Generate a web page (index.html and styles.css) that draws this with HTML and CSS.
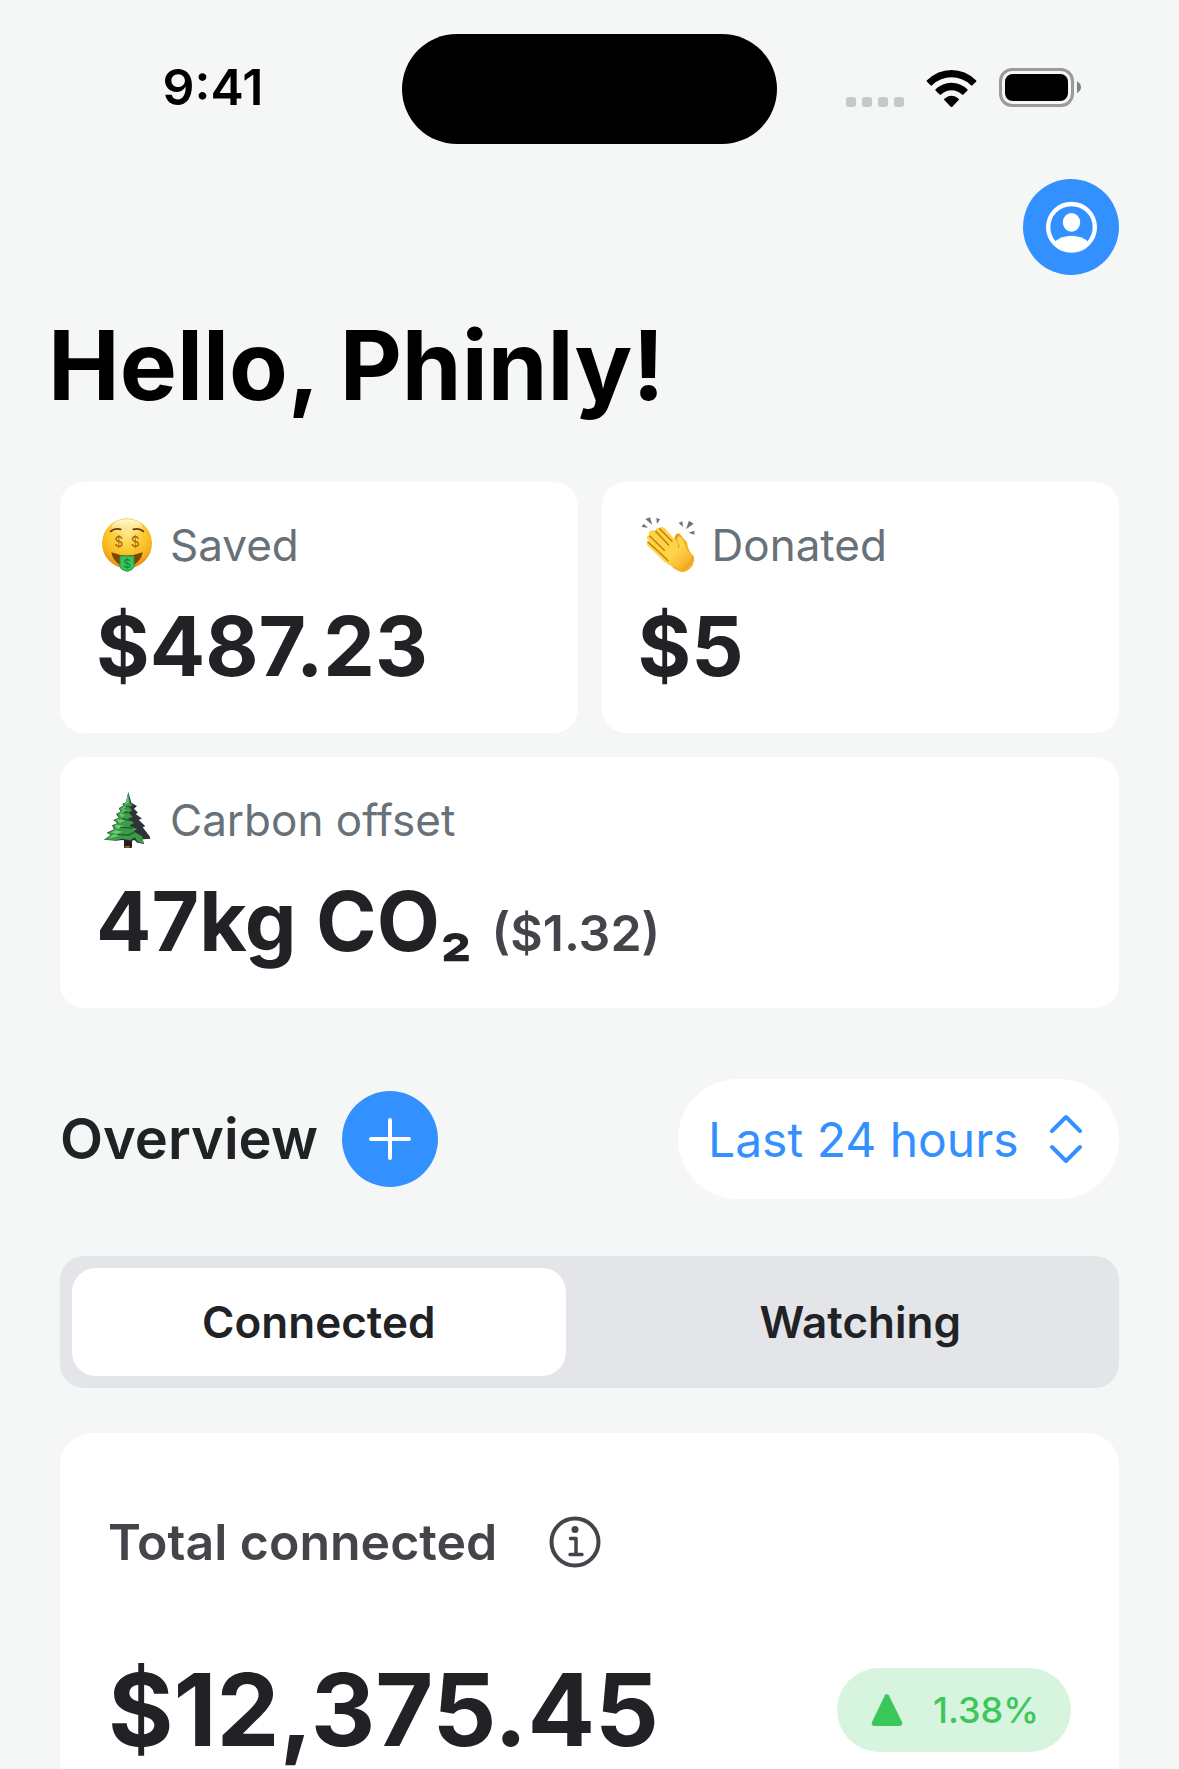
FILE: index.html
```html
<!DOCTYPE html>
<html lang="en">
<head>
<meta charset="utf-8">
<meta name="viewport" content="width=device-width, initial-scale=1">
<title>Phinly</title>
<link rel="stylesheet" href="styles.css">
</head>
<body>
<div class="status-bar">
  <time class="status-time">9:41</time>
  <div class="island"></div>
  <div class="status-icons" aria-hidden="true">
    <div class="signal"><i></i><i></i><i></i><i></i></div>
    <svg class="wifi" viewBox="379 147 151 111">
      <path d="M381 178Q413 147 454.500 147Q496 147 528 178Q531 180 528 182L518 192Q515 195 512 192Q487 169 454.500 169Q422 169 397 192Q394 195 391 192L381 182Q378 180 381 178Z"/>
      <path d="M407 205Q427 185 454.500 185Q482 185 502 205Q504 207 502 209L491 220Q488 223 485 220Q471 208 454.500 208Q438 208 424 220Q421 223 418 220L407 209Q405 207 407 205Z"/>
      <path d="M433 233Q443 224 454.500 224Q466 224 476 233Q478 235 476 237L457 257Q454.500 259 452 257L433 237Q431 235 433 233Z"/>
    </svg>
    <svg class="battery" viewBox="597 144 246 117">
      <rect x="601.500" y="148.500" width="216" height="108" rx="35" fill="none" stroke="#999a9a" stroke-width="9"/>
      <rect x="615" y="162" width="189" height="81" rx="23"/>
      <path d="M831 184Q843 190 843 202Q843 213 831 219Z" fill="#808181"/>
    </svg>
  </div>
</div>

<header class="header">
  <button class="round-button profile" type="button" aria-label="Profile">
    <svg viewBox="669 477 288 288">
      <circle cx="814.500" cy="622" r="70" fill="none" stroke="#fff" stroke-width="13"/>
      <ellipse cx="814.500" cy="607" rx="26" ry="28" fill="#fff"/>
      <path d="M763 665Q786 647 814.500 647Q843 647 866 665Q846 694 814.500 694Q783 694 763 665Z" fill="#fff"/>
    </svg>
  </button>
  <h1 class="greeting">Hello, Phinly!</h1>
</header>

<main class="content">
  <section class="stats" aria-label="Totals">
    <article class="stat">
      <h2 class="stat-label">
        <svg class="emoji" viewBox="18 24 192 192" aria-hidden="true">
          <defs>
            <radialGradient id="face" cx="0.5" cy="0.3" r="0.7">
              <stop offset="0" stop-color="#fde98a"/>
              <stop offset="0.45" stop-color="#fdcb35"/>
              <stop offset="0.8" stop-color="#f6b01d"/>
              <stop offset="1" stop-color="#d98a10"/>
            </radialGradient>
            <linearGradient id="shine" x1="0" y1="0" x2="0" y2="1">
              <stop offset="0" stop-color="#fffbe6"/>
              <stop offset="1" stop-color="#fff3b0" stop-opacity="0"/>
            </linearGradient>
          </defs>
          <circle cx="111" cy="115" r="75" fill="url(#face)"/>
          <ellipse cx="111" cy="66" rx="46" ry="23" fill="url(#shine)"/>
          <path d="M62 79Q74 68 92 73M130 73Q148 68 160 79" fill="none" stroke="#5a3a0a" stroke-width="5" stroke-linecap="round"/>
          <path d="M64 142Q111 161 158 142Q155 165 132 180L90 180Q67 165 64 142Z" fill="#7b4505"/>
          <path d="M90 153H132V185Q131 192 120 196Q113 202 102 196Q91 192 90 185Z" fill="#35c65b" stroke="#2a9847" stroke-width="3"/>
          <g font-family="Inter, sans-serif" text-anchor="middle">
            <text x="86" y="127" font-size="42" fill="#a8610a">$</text>
            <text x="136" y="127" font-size="42" fill="#a8610a">$</text>
            <text x="111" y="189" font-size="36" fill="#1f7f38">$</text>
          </g>
        </svg>
        Saved
      </h2>
      <p class="stat-value">$487.23</p>
    </article>

    <article class="stat">
      <h2 class="stat-label">
        <svg class="emoji" viewBox="24 24 192 192" aria-hidden="true">
          <defs>
            <linearGradient id="hand" x1="0" y1="0" x2="1" y2="1">
              <stop offset="0" stop-color="#ffd23f"/>
              <stop offset="0.6" stop-color="#fed54a"/>
              <stop offset="1" stop-color="#efa51e"/>
            </linearGradient>
          </defs>
          <g fill="#6b747b">
            <path d="M46 42L60 37L67 60Z"/><path d="M79 39L90 43L81 57Z"/><path d="M35 66L41 56L54 68Z"/>
            <path d="M146 54L157 49L159 66Z"/><path d="M177 47L191 56L168 73Z"/><path d="M176 83L193 77V89Z"/>
          </g>
          <path d="M134 94Q142 80 150 88L171 112Q173 136 190 152Q196 162 187 182Q172 202 155 201Q136 196 124 183Z" fill="#f2b025"/>
          <path d="M136 96Q142 80 150 91L162 116L145 120Z" fill="#e79e1b"/>
          <path d="M76 78Q78 67 87 70Q94 61 104 70L142 111Q140 96 147 94Q155 96 160 108L172 137L187 154Q192 164 179 182Q164 197 144 190Q122 184 103 170L61 129Q49 120 50 113Q53 107 59 109Q46 98 53 92Q55 91 58 92Q53 81 62 77Q69 74 76 78Z" fill="url(#hand)"/>
          <path d="M77 79L116 120M89 71L126 109M59 93L103 136M54 111L96 149L114 167" fill="none" stroke="#c27a0b" stroke-width="4" stroke-linecap="round"/>
          <path d="M142 111Q151 123 145 129M188 156Q180 181 158 192" fill="none" stroke="#e39b18" stroke-width="3" stroke-linecap="round"/>
        </svg>
        Donated
      </h2>
      <p class="stat-value">$5</p>
    </article>

    <article class="stat stat-wide">
      <h2 class="stat-label">
        <svg class="emoji" viewBox="18 24 192 192" aria-hidden="true">
          <rect x="102" y="172" width="24" height="32" rx="3" fill="#241f1d"/>
          <path d="M106 198H119V203H106Z" fill="#b4691f"/>
          <path d="M115 36L124 68L141 78L132 86L144 98L137 102L156 116L146 119L166 139L158 142L179 169L181 176L158 178L162 192L142 188L133 180L122 184L96 180L78 182L42 179L62 165L50 158L72 148L66 136L82 130L70 120L86 113L78 101L92 95L86 85L101 76L96 72L107 68Z" fill="#2e3338"/>
          <path d="M115 36L120 68L128 76L118 82L127 92L115 97L128 110L113 117L132 128L118 137L142 148L130 154L158 170L160 190L144 186L134 172L120 181L96 176L80 180L42 179L62 165L54 158L74 148L68 136L84 130L72 120L88 113L80 101L93 95L88 85L102 76L97 72L109 67Z" fill="#3c9b46"/>
          <path d="M114 42L116 68L104 75L115 78L96 87L111 91L90 101L106 106L84 118L108 120L80 134L104 138L72 151L98 155L70 165L98 164L54 177L76 159L62 158L82 147L74 137L90 130L80 120L94 112L88 101L99 94L94 86L107 76Z" fill="#68cf70"/>
          <path d="M103 96L114 98M98 117L122 122M92 142L126 144M84 164L117 165L132 157M108 79L121 80" fill="none" stroke="#245b35" stroke-width="4" stroke-linecap="round"/>
        </svg>
        Carbon offset
      </h2>
      <p class="stat-value">47kg CO<span class="stat-sub">₂</span> <span class="stat-note">($1.32)</span></p>
    </article>
  </section>

  <section class="overview">
    <div class="overview-title">
      <h2>Overview</h2>
      <button class="round-button" type="button" aria-label="Add account">
        <svg viewBox="0 0 96 96"><path d="M48 29V67M29 48H67" fill="none" stroke="#fff" stroke-width="4" stroke-linecap="round"/></svg>
      </button>
    </div>
    <div class="period">
      <select aria-label="Period">
        <option>Last 24 hours</option>
      </select>
      <svg viewBox="0 0 34 50" aria-hidden="true"><path d="M3 17L17 3L31 17M3 33L17 47L31 33" fill="none" stroke="#3390ff" stroke-width="4" stroke-linecap="round" stroke-linejoin="round"/></svg>
    </div>
  </section>

  <nav class="tabs" aria-label="Accounts">
    <button class="tab tab-active" type="button" aria-pressed="true">Connected</button>
    <button class="tab" type="button" aria-pressed="false">Watching</button>
  </nav>

  <section class="total">
    <div class="total-head">
      <h2>Total connected</h2>
      <button class="info" type="button" aria-label="About this total">
        <svg viewBox="0 0 52 52"><circle cx="26" cy="26" r="23.500" fill="none" stroke="#44454a" stroke-width="4"/><circle cx="26" cy="13.500" r="3.500" fill="#44454a"/><path d="M21.500 22.500H27V38.500M21 38.500H33" fill="none" stroke="#44454a" stroke-width="3.500" stroke-linecap="round" stroke-linejoin="round"/></svg>
      </button>
    </div>
    <div class="total-row">
      <p class="total-value">$12,375.45</p>
      <p class="change">
        <svg viewBox="206 161 95 97" aria-hidden="true"><path d="M247 165Q253 158 259 165L299 246Q303 257 292 258H215Q204 257 208 246Z" fill="#3bc75a"/></svg>
        1.38%
      </p>
    </div>
  </section>
</main>
</body>
</html>
```
FILE: styles.css
```css
* {
  box-sizing: border-box;
}

body {
  min-height: 100vh;
  margin: 0;
  display: flex;
  flex-direction: column;
  background: #f4f7f6;
  color: #212226;
  font-family: Inter, "Liberation Sans", sans-serif;
}

h1,
h2,
p {
  margin: 0;
}

svg {
  display: block;
}

button,
select {
  border: 0;
  margin: 0;
  padding: 0;
  font: inherit;
  color: inherit;
  background: none;
}

.status-bar {
  display: grid;
  grid-template-columns: 1fr 375px 1fr;
  align-items: center;
  padding-top: 34px;
}

.status-time {
  padding: 0 0 4px 24px;
  text-align: center;
  color: #000;
  font-size: 50px;
  font-weight: 600;
  line-height: 60px;
}

.island {
  height: 110px;
  border-radius: 56px;
  background: #000;
}

.status-icons {
  display: flex;
  justify-content: center;
  align-items: flex-end;
  padding: 0 30px 4px 0;
}

.signal {
  display: flex;
  gap: 6px;
  margin-right: 22px;
}

.signal i {
  width: 10px;
  height: 10px;
  border-radius: 3px;
  background: #c7c8c8;
}

.wifi {
  width: 51px;
  height: 37px;
  margin-right: 22px;
}

.battery {
  width: 82px;
  height: 39px;
}

.header {
  display: flex;
  flex-direction: column;
  gap: 30px;
  padding: 35px 60px 57px 48px;
}

.round-button {
  width: 96px;
  height: 96px;
  border-radius: 50%;
  background: #3390ff;
}

.profile {
  align-self: flex-end;
}

.greeting {
  color: #000;
  font-size: 96px;
  font-weight: 700;
  line-height: 120px;
}

.content {
  flex: 1;
  display: flex;
  flex-direction: column;
  padding: 0 60px;
}

.stats {
  display: grid;
  grid-template-columns: 1fr 1fr;
  gap: 24px;
}

.stat {
  padding: 31px 36px 42px;
  border-radius: 24px;
  background: #fff;
}

.stat-wide {
  grid-column: 1 / -1;
}

.stat-label {
  display: flex;
  align-items: center;
  gap: 10px;
  margin-bottom: 26px;
  color: #687178;
  font-size: 44px;
  font-weight: 400;
  line-height: 64px;
}

.emoji {
  width: 64px;
  height: 64px;
}

.stat-value {
  font-size: 82px;
  font-weight: 700;
  line-height: 88px;
}

.stat-sub {
  font-size: 70px;
  line-height: 1;
}

.stat-note {
  color: #44454a;
  font-size: 50px;
  font-weight: 600;
  line-height: 1;
}

.overview {
  display: flex;
  justify-content: space-between;
  align-items: center;
  padding: 71px 0 57px;
}

.overview-title {
  display: flex;
  align-items: center;
  gap: 24px;
}

.overview-title h2 {
  font-size: 56px;
  font-weight: 600;
}

.period {
  position: relative;
}

.period select {
  display: block;
  height: 120px;
  padding: 0 100px 0 30px;
  border-radius: 60px;
  background: #fff;
  color: #3390ff;
  font-size: 48px;
  appearance: none;
}

.period svg {
  position: absolute;
  top: 35px;
  right: 36px;
  width: 34px;
  height: 50px;
  pointer-events: none;
}

.tabs {
  display: grid;
  grid-template-columns: 1fr 1fr;
  gap: 48px;
  padding: 12px;
  border-radius: 24px;
  background: #e4e5e9;
}

.tab {
  height: 108px;
  border-radius: 24px;
  font-size: 44px;
  font-weight: 600;
}

.tab-active {
  background: #fff;
}

.total {
  flex: 1;
  margin-top: 45px;
  padding: 83px 48px 0;
  border-radius: 32px 32px 0 0;
  background: #fff;
}

.total-head {
  display: flex;
  align-items: center;
  gap: 52px;
  color: #44454a;
}

.total-head h2 {
  font-size: 50px;
  font-weight: 600;
  line-height: 52px;
}

.info {
  width: 52px;
  height: 52px;
}

.total-row {
  display: flex;
  justify-content: space-between;
  align-items: center;
  padding-top: 83px;
}

.total-value {
  font-size: 100px;
  font-weight: 700;
  line-height: 118px;
}

.change {
  display: flex;
  align-items: center;
  gap: 30px;
  height: 84px;
  padding: 0 32px 0 34px;
  border-radius: 42px;
  background: #d7f4de;
  color: #3bc75a;
  font-size: 36px;
  font-weight: 500;
}

.change svg {
  width: 32px;
  height: 32px;
}
```
